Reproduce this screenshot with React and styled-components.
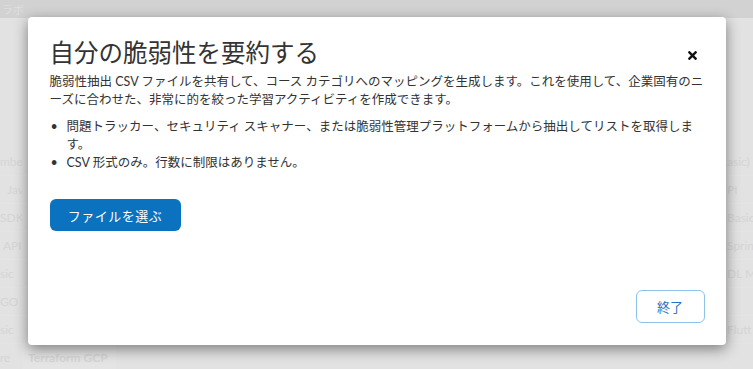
import React from "react";
import styled, { createGlobalStyle } from "styled-components";
import { FaTimes } from "react-icons/fa";

const GlobalStyle = createGlobalStyle`
  html, body {
    margin: 0;
    padding: 0;
  }
  body {
    font-family: "Lato", "Noto Sans CJK JP", sans-serif;
    background: #fff;
  }
`;

const Page = styled.div`
  position: relative;
  width: 753px;
  height: 369px;
  overflow: hidden;
  background: #fdfdfd;
`;

const TopBar = styled.div`
  height: 18px;
  background: #ebebeb;
  display: flex;
  align-items: center;
  padding-left: 2px;
  font-size: 11px;
  color: #fafafa;
  font-family: "Noto Sans CJK JP", sans-serif;
`;

const List = styled.div`
  padding-top: 130px;
  display: flex;
  flex-direction: column;
`;

const Row = styled.div`
  display: grid;
  grid-template-columns: 22px 1fr 26px;
  height: 28px;
  align-items: stretch;
  border-bottom: 1px solid #fff;
  box-sizing: border-box;
  font-size: 12px;
  color: #efefef;
`;

const SideCell = styled.div`
  display: flex;
  align-items: center;
  white-space: nowrap;
  overflow: hidden;
  padding-left: ${(p) => p.$offset || 0}px;
`;

const MidCell = styled.div`
  display: flex;
  align-items: center;
  white-space: nowrap;
`;

const Chip = styled.span`
  display: flex;
  align-items: center;
  height: 100%;
  padding: 0 8px 0 6px;
  background: #ffffff;
  font-weight: 700;
  color: #efefef;
`;

const Overlay = styled.div`
  position: absolute;
  inset: 0;
  background: rgba(0, 0, 0, 0.105);
  display: flex;
  justify-content: center;
  align-items: flex-start;
  padding-top: 17px;
`;

const Modal = styled.div`
  width: 698px;
  height: 328px;
  box-sizing: border-box;
  background: #fff;
  border-radius: 4px;
  padding: 20px 21px 22px 22px;
  display: flex;
  flex-direction: column;
  box-shadow: 0 4px 14px rgba(0, 0, 0, 0.45);
  color: #333;
`;

const Header = styled.div`
  display: flex;
  justify-content: space-between;
  align-items: center;
  height: 32px;
`;

const Title = styled.h2`
  margin: 0;
  font-size: 24.5px;
  font-weight: 400;
  line-height: 32px;
  color: #333;
`;

const CloseButton = styled.button`
  border: none;
  background: none;
  padding: 0;
  margin: 4px 6px 0 0;
  color: #111;
  display: flex;
  cursor: pointer;
`;

const Description = styled.p`
  margin: 4px 0 0;
  font-size: 12.5px;
  line-height: 18px;
`;

const Bullets = styled.ul`
  margin: 9px 0 0;
  padding: 0;
  list-style: none;
`;

const Bullet = styled.li`
  display: flex;
  font-size: 12.5px;
  line-height: 18px;
  &::before {
    content: "•";
    flex: 0 0 17px;
    box-sizing: border-box;
    padding-left: 1px;
  }
`;

const PrimaryButton = styled.button`
  margin-top: 27px;
  align-self: flex-start;
  width: 131px;
  height: 32px;
  background: #0b72c0;
  color: #fff;
  border: none;
  border-radius: 6px;
  font-family: inherit;
  font-size: 13px;
  letter-spacing: 0.5px;
  cursor: pointer;
`;

const Footer = styled.div`
  margin-top: auto;
  display: flex;
  justify-content: flex-end;
`;

const SecondaryButton = styled.button`
  width: 69px;
  height: 33px;
  background: #fff;
  border: 1px solid #8dc3ea;
  border-radius: 6px;
  color: #1f76c2;
  font-family: inherit;
  font-size: 13px;
  cursor: pointer;
`;

const rows = [
  { left: "mbed", lo: 0, right: "asic)" },
  { left: "Java", lo: 7, right: "PI" },
  { left: "SDK", lo: 0, right: "Basic" },
  { left: "API", lo: 3, right: "Sprin" },
  { left: "sic", lo: 0, right: "DL Ma" },
  { left: "GO", lo: 0, right: "" },
  { left: "sic", lo: 0, right: "Flutt" },
  { left: "re", lo: 0, right: "", mid: "Terraform GCP" },
];

export default function App() {
  return (
    <>
      <GlobalStyle />
      <Page>
        <TopBar>ラボ</TopBar>
        <List>
          {rows.map((r, i) => (
            <Row key={i}>
              <SideCell $offset={r.lo}>{r.left}</SideCell>
              <MidCell>{r.mid && <Chip>{r.mid}</Chip>}</MidCell>
              <SideCell $offset={0}>{r.right}</SideCell>
            </Row>
          ))}
        </List>
        <Overlay>
          <Modal role="dialog">
            <Header>
              <Title>自分の脆弱性を要約する</Title>
              <CloseButton aria-label="閉じる">
                <FaTimes size={13} />
              </CloseButton>
            </Header>
            <Description>
              脆弱性抽出 CSV ファイルを共有して、コース カテゴリへのマッピングを生成します。これを使用して、企業固有のニーズに合わせた、非常に的を絞った学習アクティビティを作成できます。
            </Description>
            <Bullets>
              <Bullet>
                問題トラッカー、セキュリティ スキャナー、または脆弱性管理プラットフォームから抽出してリストを取得します。
              </Bullet>
              <Bullet>CSV 形式のみ。行数に制限はありません。</Bullet>
            </Bullets>
            <PrimaryButton>ファイルを選ぶ</PrimaryButton>
            <Footer>
              <SecondaryButton>終了</SecondaryButton>
            </Footer>
          </Modal>
        </Overlay>
      </Page>
    </>
  );
}
